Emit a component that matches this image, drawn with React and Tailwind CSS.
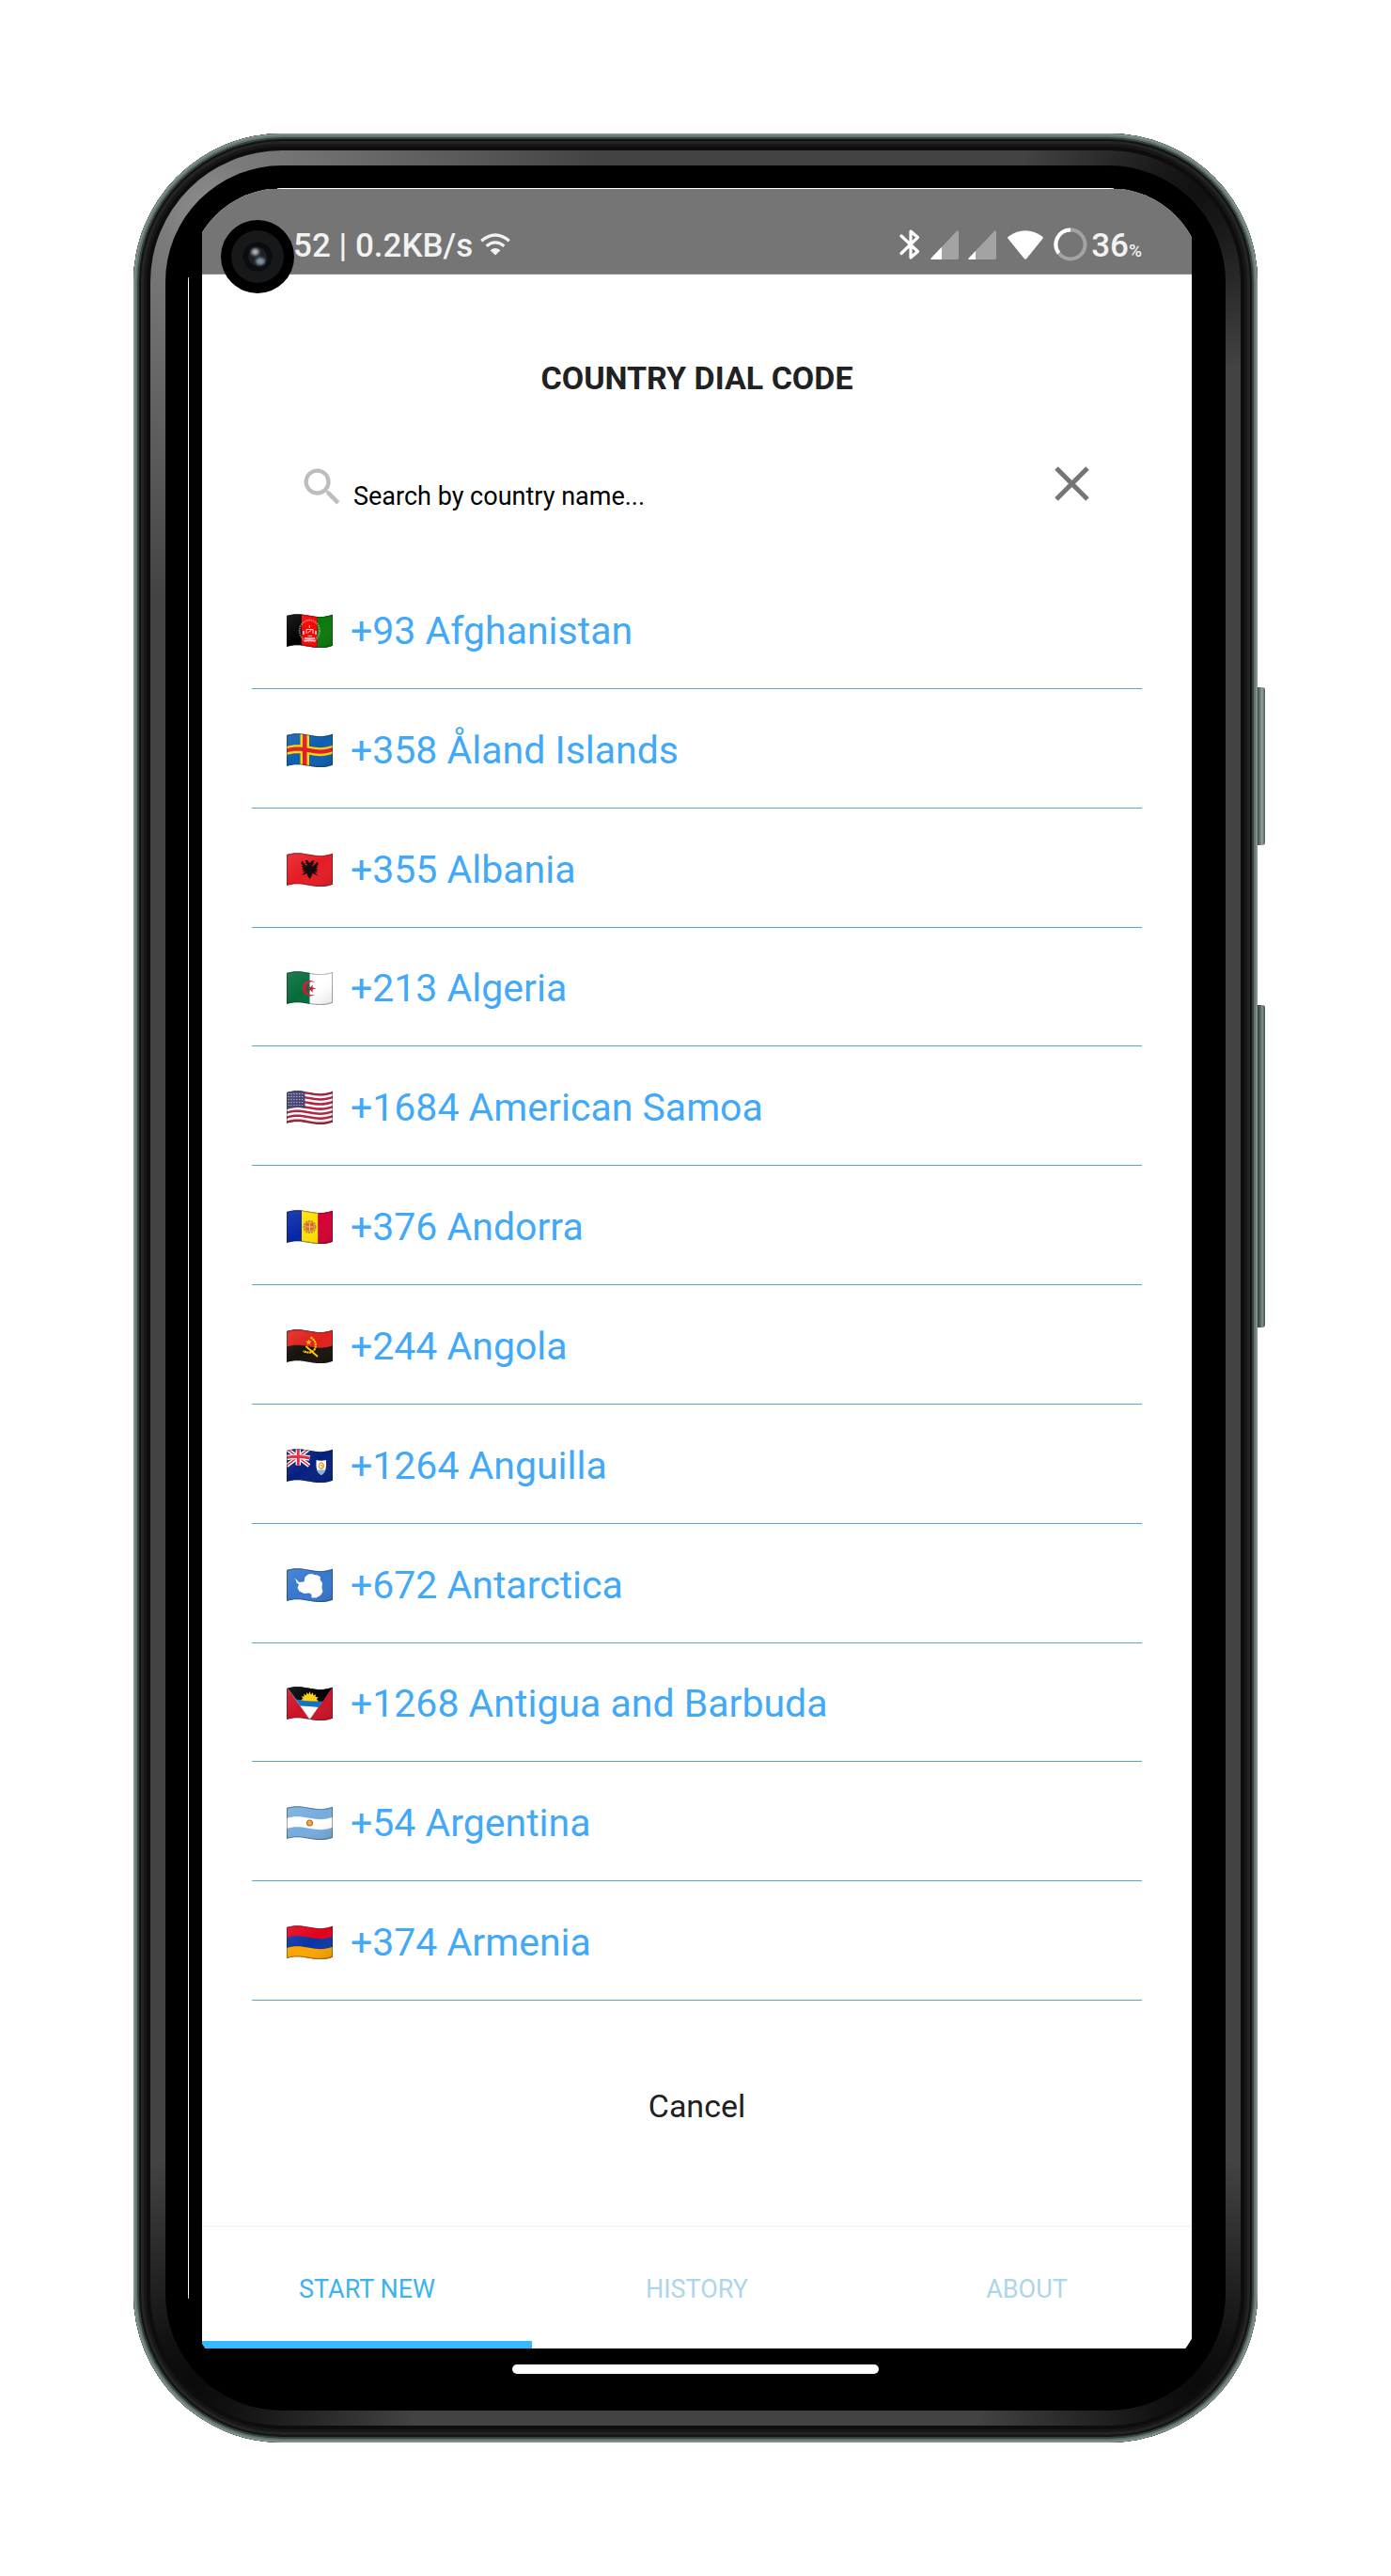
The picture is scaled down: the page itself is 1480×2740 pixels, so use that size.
import React, { useState } from "react";

/* ---------- waving flags, drawn on a 49 x 36 canvas ---------- */

const edge = (y) =>
  `M0 ${y + 2} C7 ${y - 0.5} 15 ${y - 0.3} 24 ${y + 1.7} S41 ${y + 3.8} 49 ${y + 0.7}`;
const band = (top, bottom) =>
  `${edge(top)} L49 ${bottom + 0.7} C41 ${bottom + 3.8} 33 ${bottom + 3.7} 24 ${bottom + 1.7} S7 ${bottom - 0.5} 0 ${bottom + 2} Z`;
const FLAG_SHAPE = band(0, 33);

function Flag({ id, children }) {
  return (
    <svg viewBox="0 0 49 36" className="h-9 w-[49px] shrink-0" aria-hidden="true">
      <defs>
        <clipPath id={`clip-${id}`}>
          <path d={FLAG_SHAPE} />
        </clipPath>
        <linearGradient id={`shade-${id}`} x1="0" y1="0" x2="1" y2="1">
          <stop offset="0" stopColor="#fff" stopOpacity="0.12" />
          <stop offset="0.5" stopColor="#fff" stopOpacity="0" />
          <stop offset="1" stopColor="#000" stopOpacity="0.12" />
        </linearGradient>
      </defs>
      <g clipPath={`url(#clip-${id})`}>
        {children}
        <path d={FLAG_SHAPE} fill={`url(#shade-${id})`} />
        <path d={FLAG_SHAPE} fill="none" stroke="#1a1a1a" strokeOpacity="0.38" strokeWidth="2" />
      </g>
    </svg>
  );
}

const Fill = ({ c }) => <rect width="49" height="36" fill={c} />;

function Afghanistan() {
  return (
    <Flag id="af">
      <Fill c="#000" />
      <rect x="16" width="16.5" height="36" fill="#fe0000" />
      <rect x="32.5" width="17" height="36" fill="#0a7a0a" />
      <ellipse cx="24.3" cy="18" rx="10.6" ry="11.4" fill="none" stroke="#c9b9b0" strokeWidth="2" strokeDasharray="1.6 0.8" strokeOpacity="0.6" />
      <path d="M18 22 V18 M31 22 V18 M19 26 H30 M18.5 29 Q24 27 30.5 29" fill="none" stroke="#fff" strokeWidth="1.6" strokeOpacity="0.85" />
      <path d="M21 21 V16.5 H28 V21 M24.3 12 V15 M22.5 20 L26.5 17 M22.5 23.5 H27" fill="none" stroke="#ffd9d4" strokeWidth="1" />
    </Flag>
  );
}

function Aland() {
  return (
    <Flag id="ax">
      <Fill c="#0d5eaf" />
      <rect x="14.5" width="9.5" height="36" fill="#ffd200" />
      <path d={band(12, 21)} fill="#ffd200" />
      <rect x="17" width="4.5" height="36" fill="#d81e2c" />
      <path d={band(14.4, 18.6)} fill="#d81e2c" />
    </Flag>
  );
}

function Albania() {
  return (
    <Flag id="al">
      <Fill c="#e61b23" />
      <path
        d="M24.5 11 L22 8 L19 8 L21 10 L19.5 11 L22 12.5 L21 14 L16 8.5 L15.5 12 L17.5 13.5 L15.5 14.5 L18 16 L16 17.5 L18.5 18.5 L16.5 20.5 L20 20 L16 24 L21.5 22 L22.5 25 L24.5 28 L26.5 25 L27.5 22 L33.5 24.5 L29.5 20.5 L33 21 L31 19 L33.5 18.5 L31 16.5 L33.5 15.5 L31.5 14.5 L33.5 13 L33 9.5 L28 14.5 L27 13 L29.5 11.5 L28 10.5 L30 8.5 L27 8.5 Z"
        fill="#15090a"
      />
    </Flag>
  );
}

function Algeria() {
  return (
    <Flag id="dz">
      <Fill c="#fff" />
      <rect width="24.5" height="36" fill="#046c3a" />
      <path d="M30.5 12 A8.3 8.3 0 1 0 30.5 24.5 A7 7 0 1 1 30.5 12 Z" fill="#d2143a" />
      <path d="M31.5 18.5 L27.6 19.6 L27.6 23 L25.6 20.2 L22.6 21.2 L24.6 18.5 L22.6 16 L25.6 16.9 L27.6 14.2 L27.6 17.4 Z" fill="#d2143a" />
    </Flag>
  );
}

function UnitedStates() {
  return (
    <Flag id="as">
      <Fill c="#fff" />
      {[0, 2, 4, 6, 8, 10, 12].map((i) => (
        <path key={i} d={band((i * 33) / 13, ((i + 1) * 33) / 13)} fill="#b2223c" />
      ))}
      <path d="M0 0 H19.5 V18.5 Q8 17 0 20 Z" fill="#3f3e70" />
      {[3.5, 6.5, 9.5, 12.5, 15.5].map((y) => (
        <path key={y} d={`M1.5 ${y} H18.5`} stroke="#fff" strokeOpacity="0.65" strokeWidth="1.1" strokeDasharray="1.2 1.7" />
      ))}
    </Flag>
  );
}

function Andorra() {
  return (
    <Flag id="ad">
      <Fill c="#0626a8" />
      <rect x="16" width="17.5" height="36" fill="#fedf00" />
      <rect x="33.5" width="16" height="36" fill="#d50032" />
      <circle cx="24.5" cy="18" r="6.2" fill="#e8a33c" stroke="#b18a3a" strokeWidth="1.6" strokeDasharray="2 1" />
      <path d="M20.5 14 H28.5 V20 Q24.5 24.5 20.5 20 Z" fill="#d8622f" />
      <path d="M24.5 14 V22 M21 18 H28" stroke="#f6cf55" strokeWidth="1.1" />
    </Flag>
  );
}

function Angola() {
  return (
    <Flag id="ao">
      <Fill c="#17120d" />
      <path d={band(-2, 16.5)} fill="#e0201b" />
      <path d="M25.5 8.5 Q33 13 30 21 Q26 27 17.5 23" fill="none" stroke="#ffce00" strokeWidth="2.1" strokeDasharray="2.2 0.6" />
      <path d="M20.5 18 L33 29" stroke="#ffce00" strokeWidth="1.8" />
      <path d="M23.5 10.5 L24.4 12.6 L26.6 12.8 L24.9 14.2 L25.4 16.4 L23.5 15.2 L21.6 16.4 L22.1 14.2 L20.4 12.8 L22.6 12.6 Z" fill="#ffce00" />
    </Flag>
  );
}

function Anguilla() {
  return (
    <Flag id="ai">
      <Fill c="#05207f" />
      <path d="M0 0 L24 18 M24 0 L0 18" stroke="#fff" strokeWidth="4.2" />
      <path d="M0 0 L24 18 M24 0 L0 18" stroke="#dc2440" strokeWidth="1.5" />
      <path d="M12.3 0 V17.5 M0 9.5 Q12 7 24.5 10" fill="none" stroke="#fff" strokeWidth="5.4" />
      <path d="M12.3 0 V17.5 M0 9.5 Q12 7 24.5 10" fill="none" stroke="#dc2440" strokeWidth="3" />
      <path d="M31.5 12 Q36.5 13.5 42 12 V18 Q42 25 36.8 28 Q31.5 25 31.5 18 Z" fill="#fff" />
      <path d="M32 22.5 H41.4 Q40 26 36.8 28 Q33.3 26 32 22.5 Z" fill="#7fb7dd" />
      <path d="M34.5 20 Q33.5 16 37 14.5 Q40.5 16.5 39 20 Q37 22 34.5 20 Z M36 17 L39 19" fill="none" stroke="#f29a2e" strokeWidth="1.3" />
    </Flag>
  );
}

function Antarctica() {
  return (
    <Flag id="aq">
      <Fill c="#3578cf" />
      <path
        d="M8 10.5 L11.5 13 L13 15 L18.5 14.5 L19.5 9.5 L23 6.5 L27 6 L29 7 L33 7.5 L36 9.5 L35.5 12 L38 16 L37.5 21 L38.5 25 L36 29 L31.5 31.5 L26.5 31.5 L26.5 28 L24 26.5 L18.5 27 L13.5 24.5 L11.5 21 L13 17.5 L10.5 15.5 L10 13 Z"
        fill="#fff"
      />
    </Flag>
  );
}

function Antigua() {
  return (
    <Flag id="ag">
      <Fill c="#ce1226" />
      <path d="M0 0 H49 L24.5 35 Z" fill="#fff" />
      <path d="M0 0 H49 L34 22 Q24 20.5 14.5 20.5 Z" fill="#0b72c8" />
      <path d="M0 0 H49 L38.6 15.6 Q26 16.5 10.2 13.6 Z" fill="#000" />
      <path
        d="M15 14.5 L17.5 12.5 L15.5 10.5 L18.8 10.5 L18 7.8 L20.8 9.2 L21.5 6 L23.2 8.6 L24.5 5 L25.8 8.6 L28 6.2 L28.4 9.4 L31.2 8.2 L30.5 11 L33.8 11.2 L31.8 13.2 L34 15.7 Q25 16 15 14.5 Z"
        fill="#fdd116"
      />
    </Flag>
  );
}

function Argentina() {
  return (
    <Flag id="ar">
      <Fill c="#76acde" />
      <path d={band(11, 22)} fill="#fff" />
      <circle cx="24.5" cy="18" r="3" fill="#f4a92c" stroke="#a9743a" strokeWidth="1.1" />
    </Flag>
  );
}

function Armenia() {
  return (
    <Flag id="am">
      <Fill c="#e3001b" />
      <path d={band(11, 22.2)} fill="#0a35a5" />
      <path d={band(22, 36)} fill="#fba500" />
    </Flag>
  );
}

const COUNTRIES = [
  { code: "+93", name: "Afghanistan", Icon: Afghanistan },
  { code: "+358", name: "Åland Islands", Icon: Aland },
  { code: "+355", name: "Albania", Icon: Albania },
  { code: "+213", name: "Algeria", Icon: Algeria },
  { code: "+1684", name: "American Samoa", Icon: UnitedStates },
  { code: "+376", name: "Andorra", Icon: Andorra },
  { code: "+244", name: "Angola", Icon: Angola },
  { code: "+1264", name: "Anguilla", Icon: Anguilla },
  { code: "+672", name: "Antarctica", Icon: Antarctica },
  { code: "+1268", name: "Antigua and Barbuda", Icon: Antigua },
  { code: "+54", name: "Argentina", Icon: Argentina },
  { code: "+374", name: "Armenia", Icon: Armenia },
];

/* ---------- status bar ---------- */

function Signal({ level }) {
  return (
    <svg viewBox="0 0 30 31" className="h-[31px] w-[30px]" aria-hidden="true">
      <path d="M1.5 31 Q-0.5 31 1 29.3 L28 0.8 Q30 -0.5 30 2 V29 Q30 31 28 31 Z" fill="#a3a3a3" />
      <path d={`M1.5 31 Q-0.5 31 1 29.3 L${level} ${30.4 - level * 1.06} V31 Z`} fill="#fff" />
    </svg>
  );
}

function Camera() {
  return (
    <svg viewBox="0 0 78 78" className="absolute left-5 top-[33px] size-[78px]" aria-hidden="true">
      <defs>
        <filter id="lens-soft" x="-50%" y="-50%" width="200%" height="200%">
          <feGaussianBlur stdDeviation="1.6" />
        </filter>
      </defs>
      <circle cx="39" cy="39" r="39" fill="#000" />
      <circle cx="39" cy="39" r="28" fill="#17181a" />
      <circle cx="39" cy="39" r="15.5" fill="#0b0c0e" />
      <circle cx="39" cy="39" r="10" fill="#1a1f25" />
      <g filter="url(#lens-soft)">
        <ellipse cx="36.5" cy="34" rx="4" ry="3.6" fill="#aeb6bd" />
        <ellipse cx="42" cy="44" rx="5" ry="4" fill="#7f95a5" />
      </g>
    </svg>
  );
}

function StatusBar() {
  return (
    <div className="relative flex h-[91px] items-end justify-between border-b border-[#8c8c8c] bg-[#757575] pb-[9px] pl-[97px] pr-[53px] text-[35px] font-medium leading-10 text-[#f2f2f2]">
      <Camera />
      <div className="flex items-center gap-2">
        <span>52 | 0.2KB/s</span>
        <svg viewBox="0 0 32 24" className="mb-1 h-6 w-8" fill="none" stroke="#f2f2f2" strokeWidth="3.2" aria-hidden="true">
          <path d="M1.2 8.2 Q16 -4.2 30.8 8.2" />
          <path d="M6.6 13.8 Q16 6 25.4 13.8" />
          <path d="M10.6 18.2 Q16 13.6 21.4 18.2 L16 23.6 Z" fill="#f2f2f2" stroke="none" />
        </svg>
      </div>
      <div className="flex items-center">
        <div className="mb-1 flex items-center">
          <svg viewBox="0 0 22 32" className="mr-[11px] h-8 w-[22px]" fill="none" stroke="#fff" strokeWidth="3.2" strokeLinejoin="round" strokeLinecap="round" aria-hidden="true">
            <path d="M2 7 L19.5 23.5 L12 30 V2 L19.5 8.5 L2 25.5" />
          </svg>
          <div className="mr-3 flex gap-2.5">
            <Signal level={12} />
            <Signal level={8} />
          </div>
          <svg viewBox="0 0 38 31" className="mr-[11px] h-[31px] w-[38px]" aria-hidden="true">
            <path d="M1 6.5 Q19 -6 37 6.5 Q38.5 7.8 37.3 9 L20.3 30 Q19 31.5 17.7 30 L0.7 9 Q-0.5 7.8 1 6.5 Z" fill="#fff" />
          </svg>
          <svg viewBox="0 0 36 36" className="mr-1 size-9" fill="none" strokeWidth="4" aria-hidden="true">
            <circle cx="18" cy="18" r="15.5" stroke="#a3a3a3" />
            <path d="M18 2.5 A15.5 15.5 0 0 0 5.5 27.2" stroke="#fff" />
          </svg>
        </div>
        <span>
          36<span className="text-[19px] leading-none">%</span>
        </span>
      </div>
    </div>
  );
}

/* ---------- screen content ---------- */

function SearchRow({ query, setQuery }) {
  return (
    <div className="mt-[70px] flex items-end pl-[102px] pr-[109px]">
      <label htmlFor="country-search" className="mr-[7px] block">
        <svg viewBox="0 0 24 24" className="size-[52px]" fill="#bdbdbd" role="img" aria-label="Search by country name">
          <path d="M15.5 14h-.79l-.28-.27C15.41 12.59 16 11.11 16 9.5 16 5.91 13.09 3 9.5 3S3 5.91 3 9.5 5.91 16 9.5 16c1.61 0 3.09-.59 4.23-1.57l.27.28v.79l5 4.99L20.49 19l-4.99-5zm-6 0C7.01 14 5 11.99 5 9.5S7.01 5 9.5 5 14 7.01 14 9.5 11.99 14 9.5 14z" />
        </svg>
      </label>
      <input
        id="country-search"
        type="text"
        value={query}
        onChange={(e) => setQuery(e.target.value)}
        placeholder="Search by country name..."
        className="h-8 min-w-0 flex-1 bg-transparent text-[27px] leading-8 text-black outline-none placeholder:text-black placeholder:opacity-100"
      />
      <button type="button" aria-label="Clear search" onClick={() => setQuery("")} className="mb-[11px]">
        <svg viewBox="0 0 37 37" className="size-[37px]" fill="none" stroke="#757575" strokeWidth="5" aria-hidden="true">
          <path d="M2 2 L35 35 M35 2 L2 35" />
        </svg>
      </button>
    </div>
  );
}

const TABS = ["START NEW", "HISTORY", "ABOUT"];

function Screen() {
  const [query, setQuery] = useState("");
  const shown = COUNTRIES.filter((c) => c.name.toLowerCase().includes(query.toLowerCase()));
  return (
    <div className="flex flex-col bg-white">
      <StatusBar />
      <h1 className="mt-[90px] text-center text-[34px] font-bold leading-10 text-[#212121]">COUNTRY DIAL CODE</h1>
      <SearchRow query={query} setQuery={setQuery} />
      <ul className="mx-[53px] mt-[62px] grid min-h-[1522px] auto-rows-fr">
        {shown.map(({ code, name, Icon }) => (
          <li key={name} className="border-b border-[#5ba6cc]">
            <button type="button" className="flex h-full w-full items-center gap-[19px] pl-[37px] pt-1 text-left text-[41px] leading-[48px] text-[#42a9f8]">
              <Icon />
              <span>
                {code} {name}
              </span>
            </button>
          </li>
        ))}
      </ul>
      <button type="button" className="mx-auto mt-[92px] px-6 text-[34px] leading-10 text-[#212121]">
        Cancel
      </button>
      <nav className="mt-[107px] grid grid-cols-3 border-t-2 border-[#f5f5f5] text-[27px] leading-8">
        {TABS.map((tab, i) => (
          <a
            key={tab}
            href="#"
            className={
              i === 0
                ? "border-b-8 border-[#33bbff] pb-[39px] pt-[50px] text-center text-[#3cb3ee]"
                : "border-b-8 border-transparent pb-[39px] pt-[50px] text-center text-[#aed5e8]"
            }
          >
            {tab}
          </a>
        ))}
      </nav>
    </div>
  );
}

/* ---------- device ---------- */

export default function App() {
  return (
    <main className="min-h-screen bg-white p-[142px] font-['Roboto',sans-serif]">
      <div className="relative mx-auto w-full max-w-[1196px]">
        <div className="absolute left-full top-[589px] h-[168px] w-2 rounded-r-[3px] bg-[linear-gradient(90deg,#3f4a46,#6c7a74_35%,#96a49d_60%,#4b5853)]" />
        <div className="absolute left-full top-[927px] h-[343px] w-2 rounded-r-[3px] bg-[linear-gradient(90deg,#343d39,#5b6963_40%,#84938c_65%,#3d4844)]" />
        <div className="rounded-[158px] bg-[#0d0d0d] p-[18px] shadow-[inset_0_0_0_2px_#7f9189,inset_0_0_0_4px_#64756d,inset_0_0_0_6px_#37413d,inset_0_0_0_8px_#101415,inset_0_0_0_11px_#242424,inset_0_0_0_14px_#171717]">
          <div className="rounded-[140px] bg-[radial-gradient(circle_at_60px_60px,#8c8c8c_0,#7a7a7a_60px,transparent_420px),radial-gradient(circle_at_calc(100%-45px)_45px,#111_0,#1a1a1a_50px,transparent_190px),radial-gradient(circle_at_45px_calc(100%-45px),#0a0a0a_0,#111_50px,transparent_240px),radial-gradient(circle_at_calc(100%-45px)_calc(100%-45px),#0a0a0a_0,#111_50px,transparent_240px),linear-gradient(#434343,#434343)] p-4">
            <div className="rounded-[124px] bg-black p-6">
              <div className="relative overflow-hidden rounded-[100px] bg-black pb-[15px] pt-px before:absolute before:bottom-[95px] before:left-0 before:top-[95px] before:w-px before:bg-white after:absolute after:left-[95px] after:right-[95px] after:top-0 after:h-px after:bg-white">
                <div className="pl-[15px] pr-3">
                  <Screen />
                </div>
                <div className="mx-auto mt-[17px] h-2.5 w-[390px] max-w-full rounded-full bg-white" />
              </div>
            </div>
          </div>
        </div>
      </div>
    </main>
  );
}
